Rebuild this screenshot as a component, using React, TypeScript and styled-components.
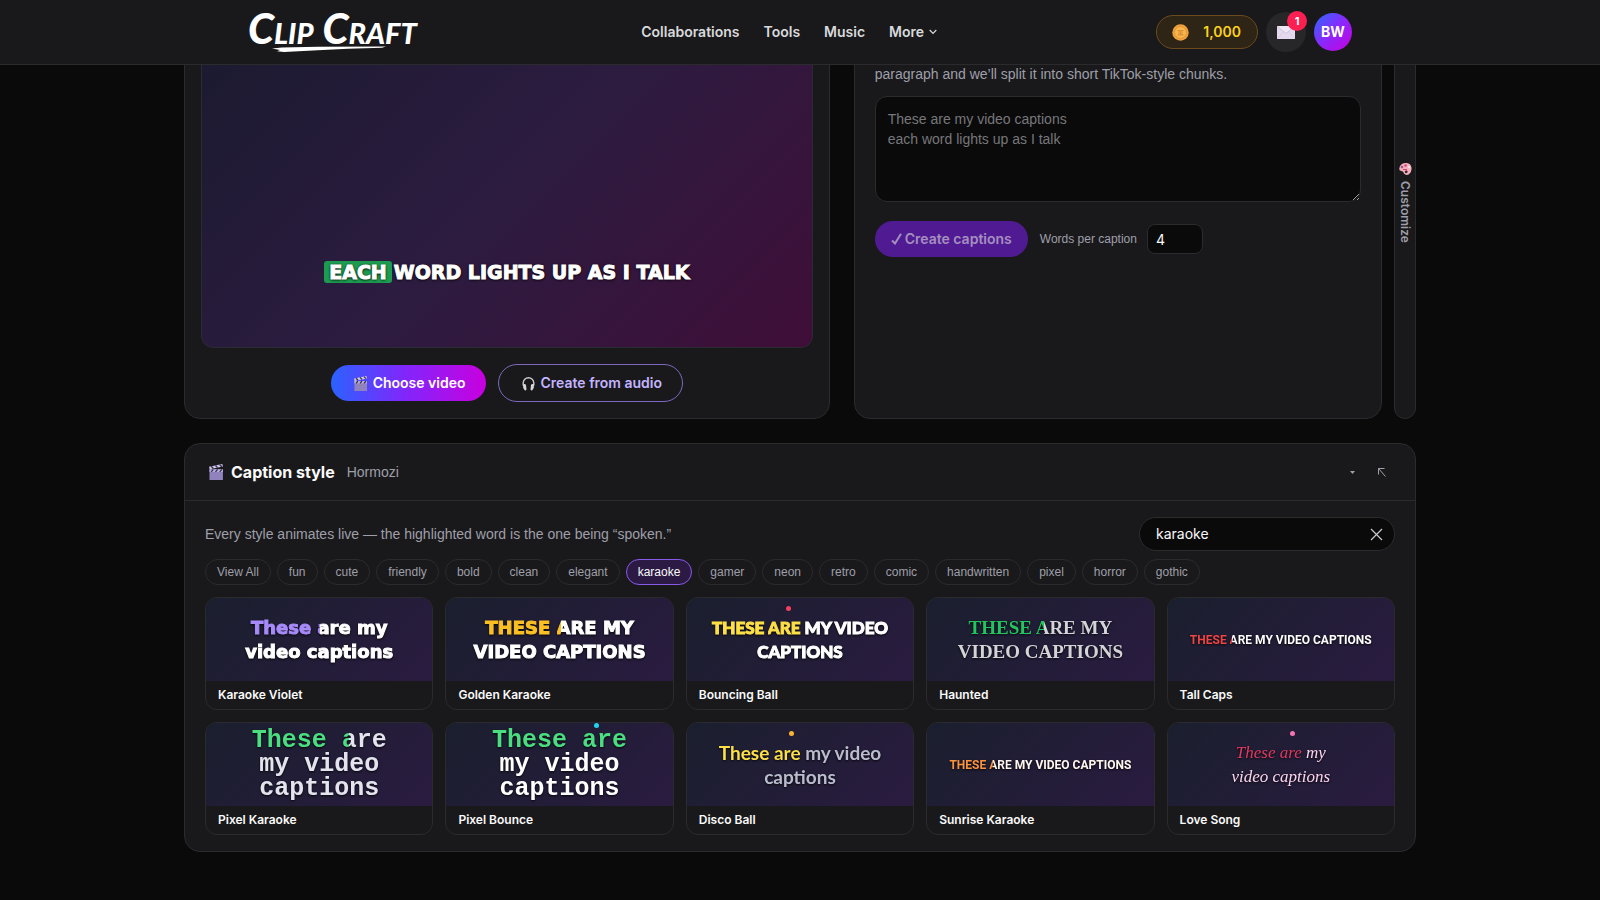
import React, { useState } from "react";
import styled, { createGlobalStyle, css } from "styled-components";

const GlobalStyle = createGlobalStyle`
  *, *::before, *::after { box-sizing: border-box; }
  body {
    margin: 0;
    background: #0a0a0a;
    color: #fafafa;
    font-family: Inter, "Liberation Sans", sans-serif;
    font-size: 14px;
    line-height: 20px;
  }
  button, input, textarea { font: inherit; color: inherit; margin: 0; }
  button { cursor: pointer; }
  p, h2 { margin: 0; }
`;

const bodyText = css`
  font-family: "Liberation Sans", Arial, sans-serif;
`;

const Header = styled.header`
  position: fixed;
  inset: 0 0 auto 0;
  z-index: 10;
  background: #19191b;
  border-bottom: 1px solid #2b2b2e;
`;

const HeaderInner = styled.div`
  max-width: 1136px;
  height: 64px;
  margin: 0 auto;
  padding: 0 16px;
  display: flex;
  align-items: center;
  justify-content: space-between;
`;

const Logo = styled.a`
  display: flex;
  flex-direction: column;
  gap: 2px;
  width: 174px;
  color: #fff;
  text-decoration: none;
  font-family: Lato, sans-serif;
  font-size: 42px;
  line-height: 32px;
  font-weight: 900;
  font-style: italic;
  font-variant: small-caps;
  white-space: nowrap;
`;

const LogoStroke = styled.svg`
  margin-left: 24px;
`;

const Nav = styled.nav`
  display: flex;
  gap: 24px;
`;

const NavLink = styled.a`
  display: flex;
  align-items: center;
  gap: 5px;
  color: #d9d9dc;
  font-weight: 600;
  text-decoration: none;
`;

const HeaderActions = styled.div`
  display: flex;
  align-items: center;
  gap: 8px;
`;

const Coins = styled.button`
  display: flex;
  align-items: center;
  gap: 14px;
  height: 34px;
  padding: 0 16px 0 15px;
  border: 1px solid #6b4a1c;
  border-radius: 17px;
  background: #2e2517;
  color: #fcd21c;
  font-weight: 600;
`;

const InboxButton = styled.button`
  position: relative;
  display: grid;
  place-items: center;
  width: 40px;
  height: 40px;
  padding: 0;
  border: 0;
  border-radius: 50%;
  background: #27272a;
`;

const Badge = styled.span`
  position: absolute;
  top: -1px;
  right: -1px;
  width: 20px;
  border-radius: 10px;
  background: #fb1f52;
  color: #fff;
  font-size: 11px;
  font-weight: 700;
`;

const Avatar = styled.button`
  width: 38px;
  height: 38px;
  padding: 0;
  border: 0;
  border-radius: 50%;
  background: linear-gradient(135deg, #2b6bff, #8b27fb 50%, #c800de);
  color: #fff;
  font-weight: 700;
`;

const Main = styled.main`
  max-width: 1264px;
  margin: -13px auto 0;
  padding: 0 16px 48px;
  display: grid;
  gap: 24px;
`;

const panel = css`
  background: #19191b;
  border: 1px solid #2b2b2e;
  border-radius: 16px;
`;

const Workspace = styled.div`
  display: grid;
  grid-template-columns: minmax(0, 1fr) 22px;
  gap: 12px;
`;

const Columns = styled.div`
  display: grid;
  grid-template-columns: minmax(0, 11fr) minmax(0, 9fr);
  gap: 24px;
`;

const PreviewPanel = styled.section`
  ${panel}
  padding: 16px;
  display: grid;
  gap: 16px;
`;

const VideoFrame = styled.div`
  aspect-ratio: 16 / 9;
  display: flex;
  align-items: flex-end;
  justify-content: center;
  padding-bottom: 64px;
  border: 1px solid #2b2b33;
  border-radius: 12px;
  background: linear-gradient(135deg, #191a2e, #2c1c40 50%, #3f0e38);
`;

const LiveCaption = styled.p`
  color: #fff;
  font-family: "DejaVu Sans", sans-serif;
  font-size: 19px;
  line-height: 22px;
  font-weight: 700;
  -webkit-text-stroke: 1px #fff;
  text-shadow: 0 1px 3px #000, 0 0 2px #000;
`;

const Spoken = styled.mark`
  padding: 0 5px;
  margin-right: 2px;
  border-radius: 3px;
  background: #1c9c50;
  color: inherit;
`;

const PreviewActions = styled.div`
  display: flex;
  align-items: center;
  justify-content: center;
  gap: 12px;
`;

const ActionButton = styled.button<{ $primary?: boolean }>`
  display: flex;
  align-items: center;
  gap: 5px;
  height: ${(p) => (p.$primary ? 36 : 38)}px;
  padding: 0 20px 0 22px;
  border: ${(p) => (p.$primary ? "0" : "1px solid #7c68bd")};
  border-radius: 19px;
  background: ${(p) =>
    p.$primary ? "linear-gradient(90deg, #2b62ff, #8424fb 50%, #c800de)" : "transparent"};
  color: ${(p) => (p.$primary ? "#fff" : "#c4b4ff")};
  font-weight: 600;
  white-space: nowrap;
`;

const ScriptPanel = styled.section`
  ${panel}
  padding: 76px 20px 20px;
`;

const Hint = styled.p`
  ${bodyText}
  color: #9f9fa9;
`;

const ScriptBox = styled.textarea`
  ${bodyText}
  display: block;
  width: 100%;
  margin: 12px 0 19px;
  padding: 12px;
  border: 1px solid #2b2b2e;
  border-radius: 12px;
  background: #0a0a0a;
  outline: 0;
  resize: vertical;
  &::placeholder { color: #77777b; }
`;

const ScriptActions = styled.div`
  display: flex;
  align-items: center;
  gap: 12px;
`;

const CreateButton = styled.button`
  display: flex;
  align-items: center;
  gap: 3px;
  height: 36px;
  padding: 0 16px;
  border: 0;
  border-radius: 18px;
  background: #501b92;
  color: #a58fc0;
  font-weight: 600;
`;

const CountLabel = styled.label`
  ${bodyText}
  display: flex;
  align-items: center;
  gap: 10px;
  color: #9f9fa9;
  font-size: 12px;
`;

const CountInput = styled.input`
  width: 56px;
  height: 30px;
  padding: 0 8px;
  border: 1px solid #2b2b2e;
  border-radius: 8px;
  background: #0a0a0a;
  color: #fafafa;
  font-family: Inter, sans-serif;
  font-size: 14px;
  outline: 0;
`;

const Rail = styled.button`
  ${panel}
  display: flex;
  align-items: center;
  justify-content: center;
  gap: 6px;
  padding: 0;
  border-radius: 12px;
  color: #9f9fa9;
  font-size: 12px;
  font-weight: 600;
  writing-mode: vertical-rl;
`;

const StylePanel = styled.section`
  ${panel}
`;

const StyleHead = styled.div`
  ${bodyText}
  display: flex;
  align-items: center;
  gap: 12px;
  height: 57px;
  padding: 0 23px;
  border-bottom: 1px solid #2b2b2e;
  color: #9f9fa9;
`;

const StyleTitle = styled.h2`
  display: flex;
  align-items: center;
  gap: 7px;
  color: #fafafa;
  font-family: Inter, sans-serif;
  font-size: 16px;
  font-weight: 700;
`;

const HeadTools = styled.div`
  display: flex;
  gap: 8px;
  margin-left: auto;
`;

const HeadTool = styled.button`
  display: grid;
  place-items: center;
  width: 21px;
  height: 20px;
  padding: 0;
  border: 0;
  background: none;
  color: #9f9fa9;
`;

const StyleBody = styled.div`
  padding: 16px 20px;
`;

const SearchRow = styled.div`
  display: flex;
  align-items: center;
  justify-content: space-between;
  margin-bottom: 8px;
`;

const SearchField = styled.div`
  display: flex;
  align-items: center;
  width: 256px;
  height: 34px;
  padding: 0 11px 0 16px;
  border: 1px solid #2b2b2e;
  border-radius: 17px;
  background: #0a0a0a;
`;

const SearchInput = styled.input`
  flex: 1;
  min-width: 0;
  padding: 0;
  border: 0;
  outline: 0;
  background: none;
`;

const ClearButton = styled.button`
  display: grid;
  padding: 0;
  border: 0;
  background: none;
  color: #c9c9cf;
`;

const Chips = styled.div`
  display: flex;
  flex-wrap: wrap;
  gap: 6px;
  margin-bottom: 12px;
`;

const Chip = styled.button<{ $active: boolean }>`
  ${bodyText}
  height: 26px;
  padding: 0 11px;
  border: 1px solid ${(p) => (p.$active ? "#8659e8" : "#2b2b2e")};
  border-radius: 13px;
  background: ${(p) => (p.$active ? "#2c1a45" : "transparent")};
  color: ${(p) => (p.$active ? "#fafafa" : "#9f9fa9")};
  font-size: 12px;
  line-height: 16px;
`;

const Cards = styled.div`
  display: grid;
  grid-template-columns: repeat(5, minmax(0, 1fr));
  gap: 12px;
`;

const Card = styled.button`
  display: flex;
  flex-direction: column;
  padding: 0;
  overflow: hidden;
  border: 1px solid #2b2b2e;
  border-radius: 12px;
  background: #19191b;
  text-align: left;
`;

const CardPreview = styled.span`
  position: relative;
  display: grid;
  place-items: center;
  width: 100%;
  height: 83px;
  background: linear-gradient(135deg, #1a1f2e, #2a1b40);
`;

const CardName = styled.span`
  padding: 6px 12px;
  font-size: 12px;
  line-height: 16px;
  font-weight: 600;
`;

type Face = "black" | "round" | "serif" | "narrow" | "mono" | "soft" | "script";

const faces: Record<Face, ReturnType<typeof css>> = {
  black: css`font-family: "DejaVu Sans", sans-serif; font-weight: 700; font-size: 18px; -webkit-text-stroke: 1px;`,
  round: css`font-family: Lato, sans-serif; font-weight: 900; font-size: 17px; -webkit-text-stroke: 1px;`,
  serif: css`font-family: "Liberation Serif", serif; font-weight: 700; font-size: 19px;`,
  narrow: css`font-family: Roboto, sans-serif; font-weight: 700; font-size: 12px;`,
  mono: css`font-family: "Liberation Mono", monospace; font-weight: 700; font-size: 25px;`,
  soft: css`font-family: Lato, sans-serif; font-weight: 700; font-size: 19px;`,
  script: css`font-family: "Liberation Serif", serif; font-style: italic; font-size: 17px;`,
};

const Sample = styled.span<{ $face: Face; $rest: string }>`
  ${(p) => faces[p.$face]}
  color: ${(p) => p.$rest};
  line-height: 24px;
  text-align: center;
  white-space: nowrap;
  filter: drop-shadow(0 1px 1px #000c);
`;

const Line = styled.span`
  display: block;
`;

const Sung = styled.span<{ $color: string }>`
  color: ${(p) => p.$color};
`;

const Singing = styled.span<{ $color: string; $rest: string; $pct: number }>`
  background: linear-gradient(90deg, ${(p) => `${p.$color} ${p.$pct}%, ${p.$rest} ${p.$pct}%`});
  background-clip: text;
  color: transparent;
`;

const Ball = styled.span<{ $color: string; $left: number; $top: number }>`
  position: absolute;
  left: ${(p) => p.$left}%;
  top: ${(p) => p.$top}px;
  width: 5px;
  height: 5px;
  border-radius: 50%;
  background: ${(p) => p.$color};
`;

const Clapper = ({ size = 15 }: { size?: number }) => (
  <svg width={size} height={size} viewBox="0 0 15 15" aria-hidden="true">
    <path d="M1 2.6 13.4 0l.6 2.4L1.6 5z" fill="#cfc5f2" />
    <path d="M3 2.2 5 4.3M7 1.4l2 2M11 .6l2 2" stroke="#393448" strokeWidth="1.3" />
    <path d="M1.4 5H14v10H1.4z" fill="#8f82bd" />
    <path d="M1.4 5H14v2.4H1.4z" fill="#bdb2e4" />
    <path d="m3 7.4 2-2.4M7 7.4 9 5M11 7.4 13 5" stroke="#393448" strokeWidth="1.3" />
  </svg>
);

const Headphones = () => (
  <svg width="15" height="15" viewBox="0 0 15 15" fill="none" aria-hidden="true">
    <path d="M2.2 9.5V7a5.3 5.3 0 0 1 10.6 0v2.5" stroke="#c9c9cc" strokeWidth="1.4" />
    <path d="M2 8.2q2.6-.6 3 .8l.5 4.6q-.6 1.2-1.8.7Q1.6 12 2 8.2zM13 8.2q-2.6-.6-3 .8l-.5 4.6q.6 1.2 1.8.7Q13.4 12 13 8.2z" fill="#d8d8da" />
  </svg>
);

const Coin = () => (
  <svg width="17" height="17" viewBox="0 0 17 17" aria-hidden="true">
    <circle cx="8.5" cy="8.5" r="8.2" fill="#f0a23c" />
    <circle cx="8.5" cy="8.5" r="6" fill="#f8b64c" stroke="#dc8f35" strokeWidth=".8" />
    <path d="M5.5 6.5h6M5.5 11h6M7 7v4M8.5 7v4M10 7v4" stroke="#cf822f" strokeWidth=".7" fill="none" />
  </svg>
);

const Envelope = () => (
  <svg width="18" height="13" viewBox="0 0 18 13" aria-hidden="true">
    <path d="M0 0h18v13H0z" fill="#e4d9ef" />
    <path d="m0 0 9 7.5L18 0" fill="#efe7f5" stroke="#c3b6d2" strokeWidth=".7" />
    <path d="m0 13 6.5-7.3M18 13l-6.5-7.3" stroke="#d2c6df" strokeWidth=".7" />
  </svg>
);

const Palette = () => (
  <svg width="13" height="12" viewBox="0 0 13 12" aria-hidden="true">
    <path d="M6 0q5.5-.5 6.5 4.5Q13 9 10 11.3q-3 1.7-5-.8Q4.5 8 2.5 8 0 8 .3 5.5 1 .5 6 0z" fill="#f4b0bd" />
    <circle cx="3" cy="4" r="1.3" fill="#9a5a88" />
    <circle cx="6.5" cy="2.5" r="1.3" fill="#d9447c" />
    <circle cx="10" cy="4" r="1.2" fill="#fbe3e6" />
    <circle cx="7.2" cy="8.8" r="1.4" fill="#3a1d2b" />
    <path d="M4 6.5h4" stroke="#d9447c" />
  </svg>
);

interface CaptionStyle {
  name: string;
  face: Face;
  color: string;
  rest: string;
  sung: string;
  singing: string;
  firstLine?: string;
  lines?: string[];
  pct: number;
  ball?: { color: string; left: number; top: number };
}

const styles: CaptionStyle[] = [
  { name: "Karaoke Violet", face: "black", color: "#a78bfa", rest: "#ffffff", sung: "These", singing: "are", firstLine: "my", lines: ["video captions"], pct: 8 },
  { name: "Golden Karaoke", face: "black", color: "#fbbf24", rest: "#ffffff", sung: "THESE", singing: "ARE", firstLine: "MY", lines: ["VIDEO CAPTIONS"], pct: 10 },
  { name: "Bouncing Ball", face: "round", color: "#fde047", rest: "#ffffff", sung: "THESE", singing: "ARE", firstLine: "MY VIDEO", lines: ["CAPTIONS"], pct: 100, ball: { color: "#f43f5e", left: 44, top: 8 } },
  { name: "Haunted", face: "serif", color: "#22c55e", rest: "#d4d4d8", sung: "THESE", singing: "ARE", firstLine: "MY", lines: ["VIDEO CAPTIONS"], pct: 20 },
  { name: "Tall Caps", face: "narrow", color: "#ef4444", rest: "#ffffff", sung: "THESE", singing: "ARE", firstLine: "MY VIDEO CAPTIONS", pct: 8 },
  { name: "Pixel Karaoke", face: "mono", color: "#4ade80", rest: "#e4e4ee", sung: "These", singing: "are", lines: ["my video", "captions"], pct: 15 },
  { name: "Pixel Bounce", face: "mono", color: "#4ade80", rest: "#ffffff", sung: "These", singing: "are", lines: ["my video", "captions"], pct: 100, ball: { color: "#22d3ee", left: 65, top: 0 } },
  { name: "Disco Ball", face: "soft", color: "#fde047", rest: "#b9bccd", sung: "These", singing: "are", firstLine: "my video", lines: ["captions"], pct: 100, ball: { color: "#fbb431", left: 45, top: 8 } },
  { name: "Sunrise Karaoke", face: "narrow", color: "#fb923c", rest: "#fff7ed", sung: "THESE", singing: "ARE", firstLine: "MY VIDEO CAPTIONS", pct: 18 },
  { name: "Love Song", face: "script", color: "#e23a5f", rest: "#fbd5ee", sung: "These", singing: "are", firstLine: "my", lines: ["video captions"], pct: 100, ball: { color: "#f472b6", left: 54, top: 8 } },
];

const tags = ["View All", "fun", "cute", "friendly", "bold", "clean", "elegant", "karaoke", "gamer", "neon", "retro", "comic", "handwritten", "pixel", "horror", "gothic"];

export default function App() {
  const [query, setQuery] = useState("karaoke");

  return (
    <>
      <GlobalStyle />
      <Header>
        <HeaderInner>
          <Logo href="#home">
            Clip Craft
            <LogoStroke width="114" height="6" viewBox="0 0 114 6" aria-hidden="true">
              <path d="M0 2.5 10 1.5 46 .8 114 .5l-4 1.3-34 1-30 1.4L12 6 5 5.2l3-1.3z" fill="#fff" />
            </LogoStroke>
          </Logo>
          <Nav aria-label="Main">
            <NavLink href="#collaborations">Collaborations</NavLink>
            <NavLink href="#tools">Tools</NavLink>
            <NavLink href="#music">Music</NavLink>
            <NavLink href="#more">
              More
              <svg width="8" height="6" viewBox="0 0 8 6" fill="none" stroke="currentColor" strokeWidth="1.2" aria-hidden="true">
                <path d="m.7 1 3.3 3.5L7.3 1" />
              </svg>
            </NavLink>
          </Nav>
          <HeaderActions>
            <Coins><Coin />1,000</Coins>
            <InboxButton aria-label="Inbox"><Envelope /><Badge>1</Badge></InboxButton>
            <Avatar>BW</Avatar>
          </HeaderActions>
        </HeaderInner>
      </Header>

      <Main>
        <Workspace>
          <Columns>
            <PreviewPanel>
              <VideoFrame>
                <LiveCaption><Spoken>EACH</Spoken>WORD LIGHTS UP AS I TALK</LiveCaption>
              </VideoFrame>
              <PreviewActions>
                <ActionButton $primary><Clapper />Choose video</ActionButton>
                <ActionButton><Headphones />Create from audio</ActionButton>
              </PreviewActions>
            </PreviewPanel>
            <ScriptPanel>
              <Hint>paragraph and we’ll split it into short TikTok-style chunks.</Hint>
              <ScriptBox rows={4} aria-label="Captions" placeholder={"These are my video captions\neach word lights up as I talk"} />
              <ScriptActions>
                <CreateButton>
                  <svg width="11" height="12" viewBox="0 0 11 12" fill="none" stroke="currentColor" strokeWidth="2" aria-hidden="true">
                    <path d="m1 7.5 3 3L10 .8" />
                  </svg>
                  Create captions
                </CreateButton>
                <CountLabel>
                  Words per caption
                  <CountInput type="number" defaultValue={4} />
                </CountLabel>
              </ScriptActions>
            </ScriptPanel>
          </Columns>
          <Rail><Palette />Customize</Rail>
        </Workspace>

        <StylePanel>
          <StyleHead>
            <StyleTitle><Clapper size={16} />Caption style</StyleTitle>
            Hormozi
            <HeadTools>
              <HeadTool aria-label="Collapse">
                <svg width="5" height="3" viewBox="0 0 5 3" aria-hidden="true"><path d="M0 0h5L2.5 3z" fill="currentColor" /></svg>
              </HeadTool>
              <HeadTool aria-label="Pop out">
                <svg width="10" height="10" viewBox="0 0 10 10" fill="none" stroke="currentColor" aria-hidden="true">
                  <path d="M1.5 7.5v-6h6M1.5 1.5l7 8" />
                </svg>
              </HeadTool>
            </HeadTools>
          </StyleHead>
          <StyleBody>
            <SearchRow>
              <Hint>Every style animates live — the highlighted word is the one being “spoken.”</Hint>
              <SearchField>
                <SearchInput aria-label="Search styles" value={query} onChange={(e) => setQuery(e.target.value)} />
                <ClearButton aria-label="Clear search" onClick={() => setQuery("")}>
                  <svg width="13" height="13" viewBox="0 0 13 13" stroke="currentColor" strokeWidth="1.2" aria-hidden="true">
                    <path d="m1 1 11 11M12 1 1 12" />
                  </svg>
                </ClearButton>
              </SearchField>
            </SearchRow>
            <Chips>
              {tags.map((tag) => (
                <Chip key={tag} $active={tag === query} onClick={() => setQuery(tag)}>{tag}</Chip>
              ))}
            </Chips>
            <Cards>
              {styles.map((s) => (
                <Card key={s.name}>
                  <CardPreview>
                    <Sample $face={s.face} $rest={s.rest}>
                      <Line>
                        <Sung $color={s.color}>{s.sung}</Sung>{" "}
                        <Singing $color={s.color} $rest={s.rest} $pct={s.pct}>{s.singing}</Singing>
                        {s.firstLine && ` ${s.firstLine}`}
                      </Line>
                      {s.lines?.map((line) => <Line key={line}>{line}</Line>)}
                    </Sample>
                    {s.ball && <Ball $color={s.ball.color} $left={s.ball.left} $top={s.ball.top} />}
                  </CardPreview>
                  <CardName>{s.name}</CardName>
                </Card>
              ))}
            </Cards>
          </StyleBody>
        </StylePanel>
      </Main>
    </>
  );
}
